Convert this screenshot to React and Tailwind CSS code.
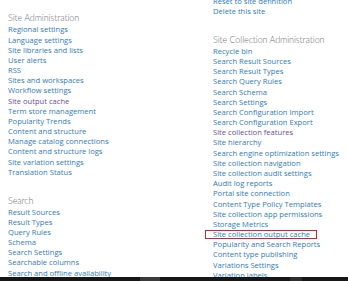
import React from "react";

const V = "v";
const leftSections = [
  {
    title: "Site Administration",
    items: [
      "Regional settings",
      "Language settings",
      "Site libraries and lists",
      "User alerts",
      "RSS",
      "Sites and workspaces",
      "Workflow settings",
      ["Site output cache", V],
      "Term store management",
      "Popularity Trends",
      "Content and structure",
      "Manage catalog connections",
      "Content and structure logs",
      "Site variation settings",
      "Translation Status",
    ],
  },
  {
    title: "Search",
    items: [
      "Result Sources",
      "Result Types",
      "Query Rules",
      "Schema",
      "Search Settings",
      "Searchable columns",
      "Search and offline availability",
    ],
  },
];

const rightTop = ["Reset to site definition", "Delete this site"];
const rightSection = {
  title: "Site Collection Administration",
  items: [
    "Recycle bin",
    "Search Result Sources",
    "Search Result Types",
    "Search Query Rules",
    "Search Schema",
    "Search Settings",
    "Search Configuration Import",
    "Search Configuration Export",
    ["Site collection features", V],
    "Site hierarchy",
    "Search engine optimization settings",
    "Site collection navigation",
    "Site collection audit settings",
    "Audit log reports",
    "Portal site connection",
    "Content Type Policy Templates",
    "Site collection app permissions",
    "Storage Metrics",
    ["Site collection output cache", "box"],
    "Popularity and Search Reports",
    "Content type publishing",
    "Variations Settings",
    "Variation labels",
  ],
};

function Item({ item }) {
  const label = Array.isArray(item) ? item[0] : item;
  const kind = Array.isArray(item) ? item[1] : null;
  const color = kind === V ? "text-[#6a4b9b]" : "text-[#2f7bb7]";
  return (
    <div className={`relative h-[10.18px] leading-[10.18px] whitespace-nowrap ${color}`}>
      {label}
      {kind === "box" && (
        <div className="absolute left-[-8px] top-[1px] w-[112px] h-[9px] border-[1.4px] border-[#d3212b]" />
      )}
    </div>
  );
}

function Header({ title, className = "" }) {
  return (
    <div
      className={`h-[12px] leading-[12px] text-[9px] font-light tracking-[-0.1px] text-[#6f6f6f] whitespace-nowrap ${className}`}
      style={{ fontFamily: 'Lato, "Open Sans", sans-serif' }}
    >
      {title}
    </div>
  );
}

export default function App() {
  return (
    <div
      className="w-[348px] h-[281px] overflow-hidden bg-white flex flex-col text-[7.6px]"
      style={{ fontFamily: '"Open Sans", "Noto Sans", sans-serif' }}
    >
      <div className="flex-1 grid grid-cols-[205px_1fr] overflow-hidden">
        <div className="pl-[8px] pt-[12.4px] flex flex-col">
          <Header title={leftSections[0].title} />
          {leftSections[0].items.map((it, i) => (
            <Item key={i} item={it} />
          ))}
          <Header title={leftSections[1].title} className="mt-[17.6px]" />
          {leftSections[1].items.map((it, i) => (
            <Item key={i} item={it} />
          ))}
        </div>
        <div className="pl-[8px] mt-[-4px] flex flex-col">
          {rightTop.map((it, i) => (
            <Item key={i} item={it} />
          ))}
          <Header title={rightSection.title} className="mt-[17.6px]" />
          {rightSection.items.map((it, i) => (
            <Item key={i} item={it} />
          ))}
        </div>
      </div>
      <div className="h-[4px] bg-[#161616] flex">
        <div className="w-[140px]" />
        <div className="w-[20px] bg-[#3a3a3a]" />
        <div className="w-[130px]" />
        <div className="w-[12px] bg-[#2e2e2e]" />
      </div>
    </div>
  );
}
